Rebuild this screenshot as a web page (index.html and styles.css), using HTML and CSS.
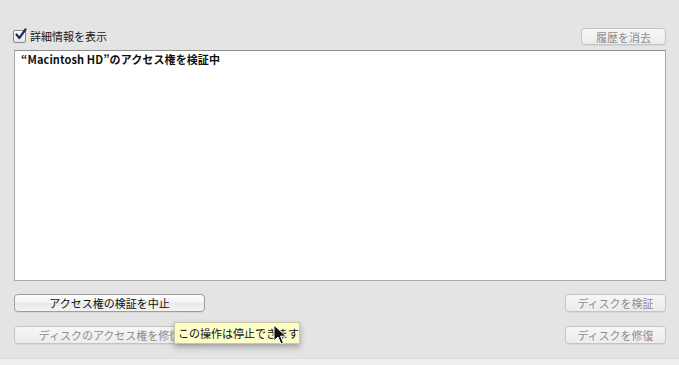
FILE: index.html
```html
<!DOCTYPE html>
<html lang="ja">
<head>
<meta charset="utf-8">
<link rel="stylesheet" href="styles.css">
</head>
<body>
<div class="panel">
  <div class="toprow">
    <label class="check">
      <span class="box"><svg width="13" height="13" viewBox="0 0 13 13"><path d="M2.5 6.5 L5.3 10 L11.5 1.5" fill="none" stroke="#1d2f5e" stroke-width="2.2" stroke-linecap="round" stroke-linejoin="round"/></svg></span>
      <span class="label">詳細情報を表示</span>
    </label>
    <button class="btn disabled small">履歴を消去</button>
  </div>
  <div class="log"><p class="title">“Macintosh HD”のアクセス権を検証中</p></div>
  <div class="row">
    <button class="btn wide">アクセス権の検証を中止</button>
    <button class="btn disabled narrow">ディスクを検証</button>
  </div>
  <div class="row">
    <div class="tipwrap">
      <button class="btn disabled wide">ディスクのアクセス権を修復</button>
      <div class="tooltip">この操作は停止できます</div>
      <svg class="cursor" width="14" height="22" viewBox="0 0 14 22"><path d="M1 1 L1 17 L5 13 L8 20 L10.5 19 L7.6 12.2 L13 12.2 Z" fill="#111" stroke="#fff" stroke-width="1"/></svg>
    </div>
    <button class="btn disabled narrow">ディスクを修復</button>
  </div>
</div>
<div class="footer"></div>
</body>
</html>
```
FILE: styles.css
```css
html, body {
  margin: 0;
  padding: 0;
}
body {
  width: 679px;
  height: 365px;
  background: #e4e4e4;
  font-family: "Noto Sans CJK JP", "Liberation Sans", sans-serif;
  font-size: 11px;
  color: #111;
  overflow: hidden;
  position: relative;
}
.panel {
  padding: 28px 13px 0 14px;
  height: 330px;
  box-sizing: border-box;
}
.toprow {
  display: flex;
  justify-content: space-between;
  align-items: center;
  height: 17px;
}
.check {
  display: flex;
  align-items: center;
  gap: 4px;
  margin-left: -1px;
}
.box {
  width: 11px;
  height: 11px;
  border: 1px solid #8a8a8a;
  border-radius: 2px;
  background: linear-gradient(#ffffff, #e6e6e6);
  position: relative;
}
.box svg {
  position: absolute;
  left: 0;
  top: -3px;
}
.label {
  font-size: 11px;
  line-height: 13px;
  color: #1a1a1a;
}
.btn {
  font-family: "Noto Sans CJK JP", "Liberation Sans", sans-serif;
  font-size: 11px;
  line-height: 14px;
  height: 18px;
  padding: 0;
  border: 1px solid #9d9d9d;
  border-radius: 4px;
  background: linear-gradient(#ffffff, #f1f1f1 50%, #e8e8e8 51%, #f4f4f4);
  color: #111;
  box-shadow: 0 1px 0 rgba(0,0,0,0.06);
}
.btn.disabled {
  color: #8d8d8d;
  border-color: #c4c4c4;
  background: linear-gradient(#f7f7f7, #ececec);
}
.small { width: 85px; height: 17px; }
.wide { width: 191px; }
.narrow { width: 101px; }
.log {
  margin-top: 5px;
  height: 231px;
  box-sizing: border-box;
  background: #fff;
  border: 1px solid #a9a9a9;
  border-top-color: #8e8e8e;
  padding: 1px 6px;
}
.title {
  margin: 0;
  font-weight: bold;
  font-size: 11px;
  line-height: 14px;
  color: #111;
  letter-spacing: 0.1px;
}
.row {
  display: flex;
  justify-content: space-between;
  align-items: center;
  margin-top: 13px;
}
.row + .row {
  margin-top: 14px;
}
.tipwrap {
  position: relative;
}
.tooltip {
  position: absolute;
  left: 160px;
  top: -4px;
  width: 126px;
  height: 22px;
  box-sizing: border-box;
  background: #fefdc8;
  border: 1px solid #c9c8a4;
  box-shadow: 0 3px 6px rgba(0,0,0,0.3);
  font-size: 11px;
  line-height: 20px;
  padding-left: 3px;
  color: #111;
  white-space: nowrap;
}
.cursor {
  position: absolute;
  left: 259px;
  top: -2px;
}
.footer {
  position: absolute;
  left: 0;
  right: 0;
  top: 358px;
  height: 7px;
  background: #efefef;
  border-top: 1px solid #dcdcdc;
}
```
